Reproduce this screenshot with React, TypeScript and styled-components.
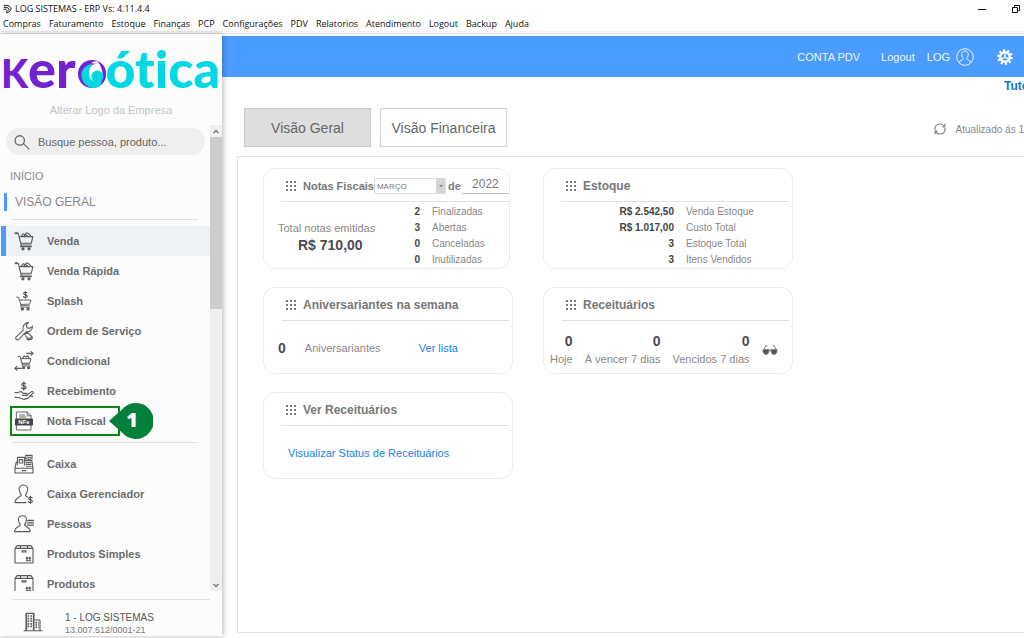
import React from "react";
import styled, { createGlobalStyle } from "styled-components";

const ui = `"Liberation Sans", Arial, sans-serif`;
const chrome = `"Open Sans", "Noto Sans", sans-serif`;

const Global = createGlobalStyle`
  * { box-sizing: border-box; }
  html, body { margin: 0; background: #fff; }
  body { font-family: ${ui}; font-size: 11px; color: #7c7c7c; overflow: hidden; }
  button, input, select { font-family: inherit; margin: 0; }
  button { padding: 0; border: 0; background: none; color: inherit; cursor: pointer; }
  a { text-decoration: none; }
  h2, p { margin: 0; }
  ul, dl, dd { margin: 0; padding: 0; list-style: none; }
`;

/* ---------- frame ---------- */
const Frame = styled.div`
  display: flex;
  flex-direction: column;
  height: 100vh;
`;
const TitleBar = styled.header`
  display: flex;
  align-items: center;
  gap: 3px;
  height: 17px;
  padding: 0 3px;
  font: 9px/16px ${chrome};
  color: #111;
`;
const WindowButtons = styled.div`
  display: flex;
  align-items: center;
  gap: 24px;
  margin-left: auto;
`;
const WindowButton = styled.button`
  display: flex;
`;
const MenuBar = styled.nav`
  display: flex;
  gap: 8px;
  height: 15px;
  padding: 0 3px;
  border-bottom: 1px solid #f2f2f2;
  color: #111;
`;
const MenuItem = styled.button`
  font: 9px/14px ${chrome};
`;
const Body = styled.div`
  display: flex;
  flex: 1;
  min-height: 0;
  margin-top: 1px;
  padding-bottom: 2px;
  border-top: 1px solid #e6e6e6;
`;

/* ---------- sidebar ---------- */
const Sidebar = styled.aside`
  position: relative;
  display: flex;
  flex-direction: column;
  flex: 0 0 222px;
  min-width: 0;
  background: #fcfcfc;
  box-shadow: 1px 0 6px rgba(0, 0, 0, 0.3);
`;
const Brand = styled.div`
  display: flex;
  flex: none;
  flex-direction: column;
  height: 91px;
  padding: 11px 1px 0;
`;
const Wordmark = styled.div`
  display: flex;
  align-items: baseline;
  height: 46px;
  font: 900 52px/46px Lato, ${ui};
  font-variant-ligatures: none;
`;
const Word = styled.span<{ $color: string }>`
  color: ${(p) => p.$color};
`;
const SmallCap = styled.span`
  font-size: 39px;
`;
const ChangeLogo = styled.button`
  margin-top: 11px;
  line-height: 16px;
  font-size: 11px;
  color: #c4c4c4;
`;
const ScrollZone = styled.div`
  display: flex;
  flex: 1;
  min-height: 0;
`;
const ScrollContent = styled.div`
  flex: 1;
  min-width: 0;
  overflow: hidden;
`;
const ScrollBar = styled.div`
  display: flex;
  flex-direction: column;
  width: 12px;
  background: #f0f0f0;
`;
const ScrollArrow = styled.button`
  display: flex;
  align-items: center;
  justify-content: center;
  height: 12px;
`;
const Track = styled.div`
  flex: 1;
`;
const Thumb = styled.div`
  height: 39%;
  background: #cdcdcd;
`;
const Search = styled.label`
  display: flex;
  align-items: center;
  gap: 8px;
  height: 27px;
  margin: 3px 5px 0 6px;
  padding: 0 8px;
  border-radius: 14px;
  background: #efefef;
`;
const SearchInput = styled.input`
  flex: 1;
  min-width: 0;
  padding: 0;
  border: 0;
  outline: 0;
  background: none;
  font-size: 11px;
  color: #666;
  &::placeholder { color: #666; opacity: 1; }
`;
const SectionLink = styled.a<{ $active?: boolean }>`
  display: block;
  margin-left: 4px;
  padding-left: ${(p) => (p.$active ? 8 : 6)}px;
  font-size: ${(p) => (p.$active ? 12 : 11)}px;
  line-height: 18px;
  color: #888;
  border-left: ${(p) => (p.$active ? "3px solid #4a9cff" : "0")};
`;
const Sections = styled.div`
  display: flex;
  flex-direction: column;
  gap: 8px;
  padding: 12px 0 8px;
`;
const Rule = styled.hr`
  flex: none;
  height: 1px;
  margin: 0 12px;
  border: 0;
  background: #e2e2e2;
`;
const Group = styled.ul`
  padding: 6px 0;
`;
const Entry = styled.li<{ $selected?: boolean }>`
  position: relative;
  margin-left: 1px;
  border-left: 5px solid ${(p) => (p.$selected ? "#4a9cff" : "transparent")};
  background: ${(p) => (p.$selected ? "#eef2f4" : "none")};
`;
const EntryLink = styled.a`
  display: flex;
  align-items: center;
  gap: 13px;
  height: 30px;
  padding-left: 8px;
  font-size: 11px;
  font-weight: bold;
  color: #6c6c6c;
`;
const Highlight = styled.span`
  position: absolute;
  inset: 0 auto 0 4px;
  width: 110px;
  border: 2px solid #0a8a0c;
`;
const Step = styled.span`
  position: absolute;
  left: 103px;
  top: -3px;
  display: flex;
  width: 44px;
  height: 36px;
`;
const StepNumber = styled.b`
  position: absolute;
  inset: 0 0 0 2px;
  text-align: center;
  font: 800 20px/34px "Open Sans", ${ui};
  color: #fff;
`;
const Company = styled.footer`
  display: flex;
  flex: none;
  flex-direction: column;
  padding-top: 8px;
`;
const CompanyRow = styled.div`
  display: flex;
  gap: 22px;
  padding: 12px 0 0 23px;
`;
const CompanyText = styled.p<{ $small?: boolean }>`
  font-size: ${(p) => (p.$small ? 9 : 10)}px;
  line-height: 12px;
  color: ${(p) => (p.$small ? "#777" : "#555")};
`;

/* ---------- main ---------- */
const Main = styled.main`
  display: flex;
  flex-direction: column;
  flex: 1;
  min-width: 0;
  padding-top: 2px;
`;
const TopBar = styled.div`
  display: flex;
  align-items: center;
  justify-content: flex-end;
  height: 41px;
  padding-right: 11px;
  background: #4a9cff;
  color: #eaf4ff;
`;
const TopButton = styled.button<{ $gap: number }>`
  display: flex;
  align-items: center;
  gap: 6px;
  margin-left: ${(p) => p.$gap}px;
  font-size: 11px;
`;
const Tutorial = styled.a`
  align-self: flex-end;
  width: 20px;
  overflow: hidden;
  font-size: 12px;
  line-height: 18px;
  font-weight: bold;
  color: #0a78d8;
`;
const TabRow = styled.div`
  display: flex;
  align-items: center;
  gap: 9px;
  margin: 13px 0 9px 22px;
`;
const Tab = styled.button<{ $active?: boolean }>`
  width: 127px;
  height: 39px;
  border: 1px solid ${(p) => (p.$active ? "#c6c6c6" : "#cfcfcf")};
  background: ${(p) => (p.$active ? "#dedede" : "#fff")};
  font-size: 14px;
  color: #666;
`;
const Updated = styled.div`
  display: flex;
  align-items: center;
  gap: 10px;
  margin-left: auto;
  font-size: 10px;
  white-space: nowrap;
  color: #888;
  padding-top: 3px;
`;
const Panel = styled.section`
  flex: 1;
  margin: 0 0 3px 15px;
  padding: 11px 0 0 25px;
  border: 1px solid #e2e2e2;
  border-right: 0;
`;
const Cards = styled.div`
  display: grid;
  grid-template-columns: 250px 250px;
  column-gap: 30px;
  row-gap: 18px;
`;
const Card = styled.article<{ $narrow?: boolean }>`
  min-height: 87px;
  margin-right: ${(p) => (p.$narrow ? 3 : 0)}px;
  border: 1px solid #ececec;
  border-radius: 12px;
`;
const CardHead = styled.div<{ $flush?: boolean }>`
  display: flex;
  align-items: center;
  height: 33px;
  margin: 0 ${(p) => (p.$flush ? 0 : 3)}px 0 18px;
  padding: 2px 0 0 4px;
  border-bottom: 1px solid #e0e0e0;
`;
const CardTitle = styled.h2<{ $small?: boolean }>`
  flex: none;
  margin-left: 7px;
  font-size: ${(p) => (p.$small ? 11 : 12)}px;
  font-weight: bold;
  white-space: nowrap;
  color: #777;
`;
const Of = styled.b`
  margin: 0 1px 0 2px;
  font-size: 11px;
`;
const MonthBox = styled.span`
  position: relative;
  display: flex;
  flex: none;
  width: 72px;
  height: 16px;
`;
const Month = styled.select`
  width: 100%;
  padding: 0 12px 0 2px;
  border: 1px solid #dcdcdc;
  border-radius: 0;
  appearance: none;
  background: linear-gradient(#d4d4d4, #d4d4d4) right / 9px 100% no-repeat #fff;
  font-size: 8px;
  color: #777;
`;
const MonthArrow = styled.span`
  position: absolute;
  right: 3px;
  top: 7px;
  border: 2px solid transparent;
  border-top-color: #777;
  border-bottom: 0;
`;
const Year = styled.input`
  flex: 1;
  min-width: 0;
  height: 18px;
  margin-bottom: 3px;
  padding: 0;
  border: 0;
  border-bottom: 1px solid #bbb;
  border-radius: 0;
  background: none;
  text-align: center;
  font-size: 12px;
  color: #777;
`;
const Split = styled.div`
  display: grid;
  grid-template-columns: 124px 1fr;
`;
const Total = styled.div`
  padding: 18px 0 0 14px;
  white-space: nowrap;
  line-height: 16px;
  color: #888;
`;
const Amount = styled.b`
  display: block;
  padding-left: 20px;
  font-size: 14px;
  line-height: 18px;
  color: #4c4a50;
`;
const Stats = styled.dl<{ $value: number }>`
  display: grid;
  grid-template-columns: ${(p) => p.$value}px 1fr;
  column-gap: 12px;
  padding-top: 2px;
  font-size: 10px;
  line-height: 16px;
`;
const StatPair = styled.div`
  display: contents;
`;
const StatValue = styled.dt`
  text-align: right;
  font-weight: bold;
  color: #444;
`;
const StatLabel = styled.dd`
  color: #888;
`;
const Big = styled.b`
  font-size: 14px;
  color: #4c4a50;
`;
const Line = styled.div`
  display: flex;
  align-items: center;
  height: 52px;
  padding: 2px 0 0 14px;
  color: #888;
`;
const Caption = styled.span`
  width: 114px;
  margin-left: 19px;
`;
const Action = styled.a<{ $inset?: boolean }>`
  color: #1a82e2;
  padding-left: ${(p) => (p.$inset ? 10 : 0)}px;
`;
const Recipes = styled.div`
  display: flex;
  align-items: center;
  gap: 12px;
  padding: 11px 0 0 6px;
`;
const Count = styled.div`
  display: flex;
  flex-direction: column;
  align-items: flex-end;
  line-height: 18px;
  white-space: nowrap;
  color: #888;
`;

/* ---------- icons ---------- */
const Svg = styled.svg`
  display: block;
  flex: none;
  fill: none;
  stroke: currentColor;
`;
const Ring = styled(Svg)`
  margin-left: 2px;
`;
const Icon = ({ children, size = 20, color = "#5a5a5a" }: { children: React.ReactNode; size?: number; color?: string }) => (
  <Svg width={size} height={size} viewBox="0 0 20 20" strokeWidth="1.1" strokeLinejoin="round" strokeLinecap="round" color={color} aria-hidden>
    {children}
  </Svg>
);

const icons: Record<string, React.ReactNode> = {
  cart: (
    <>
      <path d="M2.5 2.2H4.2L7.2 14H17.2M5.2 5.6H18.8L17.4 12.2H6.8M7.2 14L6.6 15.6H17.4" />
      <rect x="1.2" y="1.4" width="2.2" height="1.6" fill="currentColor" strokeWidth="0.4" />
      <path d="M7.2 5.4L9 2.8L11 3.6L12.6 1.8L15 3L17 5.4M9.6 5.2L11.6 3.8L14 5.2" />
      <circle cx="9" cy="17.8" r="1.1" fill="currentColor" />
      <circle cx="15" cy="17.8" r="1.1" fill="currentColor" />
    </>
  ),
  splash: (
    <>
      <path d="M2.5 6.2H4.6L7.2 14.6H15.4M5.6 9H17L15.6 13.2L6.8 13.4M7.2 14.6L6.6 16.2H15.6" strokeWidth="0.9" />
      <circle cx="8.4" cy="18" r="1.1" fill="currentColor" />
      <circle cx="14" cy="18" r="1.1" fill="currentColor" />
      <path d="M13 1.8C12.4 1 9.6 1 9.6 2.6S13.2 3.6 13.2 5.2S10 6.6 9.4 5.6M11.4 0.4V7.2" />
    </>
  ),
  wrench: (
    <>
      <path d="M2 16.2L9.2 9.2C8 5.6 10.2 1.8 14.4 1.4L12.2 4.2L13.2 6.8L15.8 7.4L18.4 5.2C18.6 9 15.4 11.4 12 10.8L4.8 18.4C3 19.6 0.8 17.8 2 16.2Z" />
      <path d="M10.6 13.6L13.2 11.4L18 15.6C19.2 17.6 17 19.4 15.4 18.4L11.6 14.8M12.6 17.8L14.6 19L17.6 16" />
    </>
  ),
  swap: (
    <>
      <path d="M4 5.4H6L8.4 13.2H15.6M6.6 7.6H17L15.6 12.2H8M8.4 13.2L8 15H16" strokeWidth="1" />
      <path d="M8.4 7.4L10 5L12 6L13.6 4.8L15.2 7.4M12.6 2.4H19M17 0.6L19.2 2.4L17 4.2M7.4 17.4H1M3 15.4L0.8 17.4L3 19.4" />
      <circle cx="9.6" cy="16.8" r="1" fill="currentColor" />
      <circle cx="14.6" cy="16.8" r="1" fill="currentColor" />
    </>
  ),
  hand: (
    <>
      <path d="M11.6 2.8C11 1.8 7.8 1.8 7.8 3.6S12 4.6 12 6.4S8.4 8 7.6 6.8M9.8 1V9" strokeWidth="1.3" />
      <path d="M1 11.6H3.8L7 10.4L9.4 12.4H12.4C13.8 12.6 13.6 14.2 12.4 14.4H8.4M13.8 13.6L17.6 10.6C19 10.2 19.8 11.4 18.8 12.4L13.8 17.4L10 18.4L5.6 16.8L1 16.4M15.6 15L18.8 15.4" />
    </>
  ),
  register: (
    <>
      <path d="M3.4 11V3.4H10.6V11M5.2 5.6H8.8V9H5.2ZM11.8 1.4H18V5H11.8ZM13.4 3.2H16.6M14.8 5V6.6M10.6 6.6H17.8L19 14.2H1L2.2 8H3.4M1 14.2V19H19V14.2M8.4 16.6H11.6" />
      <path d="M12.2 8.6H16.8M12.2 10.4H17M12.2 12.2H17.2" strokeDasharray="1 1" />
    </>
  ),
  cashier: (
    <>
      <path d="M9.4 1C6.4 1 5 3 5.2 5.8C5.4 8.4 6.6 10 7.4 10.8C7.4 13 1.2 12.6 1 18.6H12M9.4 1C12.6 1 13.8 3 13.6 5.8C13.4 8.4 12.2 10 11.4 10.8C11.4 12 12.4 12.4 13.4 12.8" />
      <path d="M18.2 13.8C17.4 12.8 14.6 12.8 14.6 14.6S18.4 15.4 18.4 17.2S15 18.8 14.2 17.6M16.4 12.2V19.6" />
    </>
  ),
  people: (
    <>
      <path d="M8.4 1.8C5.4 1.8 4.2 3.6 4.4 6C4.6 8.4 5.6 9.8 6.4 10.6C6.4 12.8 0.8 12.4 0.6 17.6H16.2C16 12.4 10.4 12.8 10.4 10.6C11.2 9.8 12.2 8.4 12.4 6C12.6 3.6 11.4 1.8 8.4 1.8Z" />
      <path d="M13.6 6.5H19.4M13.6 8.8H19.4M13.6 11.1H19.4" strokeWidth="1.3" />
    </>
  ),
  box: <path d="M1 4.4L3.2 1.6H16.8L19 4.4V19H1V4.4H19M8 6.8H12V8H8ZM6.8 1.6L6.2 4.4M13.2 1.6L13.8 4.4M13 13.2V15.8M15.8 13.2V15.8M12.2 16.8H16.6M12.2 14.2L13 13.2L13.8 14.2M15 14.2L15.8 13.2L16.6 14.2" />,
};

const NfeIcon = () => (
  <Icon>
    <path d="M2.4 8V1H13.2L17 4.8V8M13.2 1V4.8H17M2.4 14V19H17V14M5.6 4H10.6M5.6 6H12" strokeWidth="0.9" />
    <rect x="1" y="7.4" width="18" height="7" rx="1" fill="#444" stroke="none" />
    <text x="10" y="13" textAnchor="middle" fontSize="6" fontWeight="bold" fill="#fff" stroke="none">NFe</text>
  </Icon>
);

const Dots = () => (
  <Svg width="10" height="10" viewBox="0 0 10 10" aria-hidden>
    {[0, 4, 8].map((y) => [0, 4, 8].map((x) => <rect key={`${x}-${y}`} x={x} y={y} width="2" height="2" fill="#777" stroke="none" />))}
  </Svg>
);

const LogoRing = () => (
  <Ring width="28" height="28" viewBox="0 0 28 28" aria-hidden>
    <g stroke="none">
      <circle cx="14" cy="14" r="14" fill="#7421d0" />
      <path d="M14 4C7 5 3 10 3.4 15.4C3.8 22.6 9 27.6 15 28C20 28 23.6 25.6 25 22L17 16Z" fill="#00d8e4" />
      <path d="M19.6 1.2C23.6 5 25.8 9 25.2 14C25 17 24 19.4 22 21.4C16 23 11.6 19.6 11.2 15C10.4 9 13.4 4.6 18 3.6L13 3.2C14.6 2 17 1 19.6 1.2Z" fill="#fcfcfc" />
      <path d="M19.6 1.2C25 3.6 28 8 28 14C28 19 25.6 23 22.4 25.2C25.6 20 26.4 10 19.6 1.2Z" fill="#7421d0" />
      <circle cx="19.4" cy="16.4" r="6" fill="#00d8e4" />
    </g>
  </Ring>
);

const Gear = () => (
  <Svg width="16" height="16" viewBox="0 0 16 16" aria-hidden>
    <circle cx="8" cy="8" r="6.8" stroke="#fff" strokeWidth="2" strokeDasharray="2.2 2.07" />
    <circle cx="8" cy="8" r="4.8" stroke="#fff" strokeWidth="2.6" />
    <path d="M8 3.6V8L4.4 10.4M8 8L11.6 10.4" stroke="#fff" strokeWidth="1.3" />
  </Svg>
);

const menu = ["Compras", "Faturamento", "Estoque", "Finanças", "PCP", "Configurações", "PDV", "Relatorios", "Atendimento", "Logout", "Backup", "Ajuda"];
const sales = [
  ["Venda", "cart"],
  ["Venda Rápida", "cart"],
  ["Splash", "splash"],
  ["Ordem de Serviço", "wrench"],
  ["Condicional", "swap"],
  ["Recebimento", "hand"],
];
const records = [
  ["Caixa", "register"],
  ["Caixa Gerenciador", "cashier"],
  ["Pessoas", "people"],
  ["Produtos Simples", "box"],
  ["Produtos", "box"],
];

const Entries = ({ items, selected }: { items: string[][]; selected?: string }) => (
  <>
    {items.map(([label, icon]) => (
      <Entry key={label} $selected={label === selected}>
        <EntryLink href="#">
          <Icon>{icons[icon]}</Icon>
          {label}
        </EntryLink>
      </Entry>
    ))}
  </>
);

const StatList = ({ rows, value }: { rows: string[][]; value: number }) => (
  <Stats $value={value}>
    {rows.map(([v, label]) => (
      <StatPair key={label}>
        <StatValue>{v}</StatValue>
        <StatLabel>{label}</StatLabel>
      </StatPair>
    ))}
  </Stats>
);

export default function App() {
  return (
    <Frame>
      <Global />
      <TitleBar>
        <Svg width="9" height="10" viewBox="0 0 9 10" stroke="#222" aria-hidden>
          <path d="M1 1.6C5 0.6 8 2.6 8 5C7.6 7.4 5 8.8 3 9M0.8 3.4C3.8 2.8 6 4 5.8 5.4C5.4 6.8 4 7.4 2.8 7.4M0.6 5.2H3.6" />
        </Svg>
        LOG SISTEMAS - ERP Vs: 4.11.4.4
        <WindowButtons>
          <WindowButton aria-label="Minimizar">
            <Svg width="10" height="10" viewBox="0 0 10 10" stroke="#222"><path d="M1 5.5H9" /></Svg>
          </WindowButton>
          <WindowButton aria-label="Restaurar">
            <Svg width="10" height="10" viewBox="0 0 10 10" stroke="#222"><path d="M1.5 3.5H6.5V8.5H1.5ZM3.5 3.5V1.5H8.5V6.5H6.5" /></Svg>
          </WindowButton>
        </WindowButtons>
      </TitleBar>
      <MenuBar>
        {menu.map((m) => <MenuItem key={m}>{m}</MenuItem>)}
      </MenuBar>
      <Body>
        <Sidebar>
          <Brand>
            <Wordmark>
              <Word $color="#7421d0"><SmallCap>K</SmallCap>er</Word>
              <LogoRing />
              <Word $color="#00d8e4">ótica</Word>
            </Wordmark>
            <ChangeLogo>Alterar Logo da Empresa</ChangeLogo>
          </Brand>
          <ScrollZone>
            <ScrollContent>
              <Search>
                <Icon size={16} color="#666"><path d="M13 8A5.8 5.8 0 1 1 1.4 8A5.8 5.8 0 1 1 13 8M11.6 12L18.6 18.6" strokeWidth="1.6" /></Icon>
                <SearchInput aria-label="Buscar" placeholder="Busque pessoa, produto..." />
              </Search>
              <Sections>
                <SectionLink href="#">INÍCIO</SectionLink>
                <SectionLink href="#" $active>VISÃO GERAL</SectionLink>
              </Sections>
              <Rule />
              <Group>
                <Entries items={sales} selected="Venda" />
                <Entry>
                  <EntryLink href="#">
                    <NfeIcon />
                    Nota Fiscal
                  </EntryLink>
                  <Highlight />
                  <Step>
                    <Svg width="44" height="36" viewBox="0 0 44 36" aria-hidden>
                      <path d="M0 18L13 6.4A18 18 0 1 1 13 29.6Z" fill="#00803a" stroke="none" />
                    </Svg>
                    <StepNumber>1</StepNumber>
                  </Step>
                </Entry>
              </Group>
              <Rule />
              <Group>
                <Entries items={records} />
              </Group>
            </ScrollContent>
            <ScrollBar>
              <ScrollArrow aria-label="Rolar para cima">
                <Svg width="6" height="5" viewBox="0 0 6 5" stroke="#444" strokeWidth="1.4"><path d="M0.5 4L3 1.4L5.5 4" /></Svg>
              </ScrollArrow>
              <Track><Thumb /></Track>
              <ScrollArrow aria-label="Rolar para baixo">
                <Svg width="6" height="5" viewBox="0 0 6 5" stroke="#444" strokeWidth="1.4"><path d="M0.5 1L3 3.6L5.5 1" /></Svg>
              </ScrollArrow>
            </ScrollBar>
          </ScrollZone>
          <Company>
            <Rule />
            <CompanyRow>
              <Icon><path d="M3 18.6V1.4H11V18.6M11 8H17V18.6M1 18.8H19" /><path d="M4.6 4H9.6M4.6 6.6H9.6M4.6 9.2H9.6M4.6 11.8H9.6M4.6 14.4H9.6M12.4 10.6H16M12.4 13H16M12.4 15.4H16" strokeDasharray="1.6 1.2" strokeWidth="1.7" strokeLinecap="butt" /><path d="M3.6 2V18M10.4 2V18" /></Icon>
              <div>
                <CompanyText>1 - LOG SISTEMAS</CompanyText>
                <CompanyText $small>13.007.512/0001-21</CompanyText>
              </div>
            </CompanyRow>
          </Company>
        </Sidebar>
        <Main>
          <TopBar>
            <TopButton $gap={0}>CONTA PDV</TopButton>
            <TopButton $gap={21}>Logout</TopButton>
            <TopButton $gap={12}>
              LOG
              <Svg width="18" height="18" viewBox="0 0 18 18" stroke="#fff" aria-hidden>
                <circle cx="9" cy="9" r="8.3" />
                <path d="M9 3C6.6 3 5.6 4.8 5.8 6.8C6 8.8 6.8 9.8 7.4 10.4C7.4 12.4 3.6 12 3 14.6M9 3C11.4 3 12.4 4.8 12.2 6.8C12 8.8 11.2 9.8 10.6 10.4C10.6 12.4 14.4 12 15 14.6" />
              </Svg>
            </TopButton>
            <TopButton $gap={23} aria-label="Ajustes"><Gear /></TopButton>
          </TopBar>
          <Tutorial href="#">Tuto</Tutorial>
          <TabRow>
            <Tab $active>Visão Geral</Tab>
            <Tab>Visão Financeira</Tab>
            <Updated>
              <Svg width="12" height="12" viewBox="0 0 12 12" stroke="#888" strokeWidth="1.2" aria-hidden>
                <path d="M1 7V5C1.4 2.4 3.6 1 6 1C8 1 9.4 1.8 10.4 3.4M11 5V7C10.6 9.6 8.4 11 6 11C4 11 2.6 10.2 1.6 8.6M10.8 0.8V3.8H8.4M1.2 11.2V8.2H3.6" />
              </Svg>
              Atualizado ás 1
            </Updated>
          </TabRow>
          <Panel>
            <Cards>
              <Card $narrow>
                <CardHead $flush>
                  <Dots />
                  <CardTitle $small>Notas Fiscais</CardTitle>
                  <MonthBox>
                    <Month aria-label="Mês"><option>MARÇO</option></Month>
                    <MonthArrow />
                  </MonthBox>
                  <Of>de</Of>
                  <Year aria-label="Ano" defaultValue="2022" />
                </CardHead>
                <Split>
                  <Total>
                    Total notas emitidas
                    <Amount>R$ 710,00</Amount>
                  </Total>
                  <StatList value={32} rows={[["2", "Finalizadas"], ["3", "Abertas"], ["0", "Canceladas"], ["0", "Inutilizadas"]]} />
                </Split>
              </Card>
              <Card>
                <CardHead>
                  <Dots />
                  <CardTitle>Estoque</CardTitle>
                </CardHead>
                <StatList value={130} rows={[["R$ 2.542,50", "Venda Estoque"], ["R$ 1.017,00", "Custo Total"], ["3", "Estoque Total"], ["3", "Itens Vendidos"]]} />
              </Card>
              <Card>
                <CardHead>
                  <Dots />
                  <CardTitle>Aniversariantes na semana</CardTitle>
                </CardHead>
                <Line>
                  <Big>0</Big>
                  <Caption>Aniversariantes</Caption>
                  <Action href="#">Ver lista</Action>
                </Line>
              </Card>
              <Card>
                <CardHead>
                  <Dots />
                  <CardTitle>Receituários</CardTitle>
                </CardHead>
                <Recipes>
                  <Count><Big>0</Big>Hoje</Count>
                  <Count><Big>0</Big>Á vencer 7 dias</Count>
                  <Count><Big>0</Big>Vencidos 7 dias</Count>
                  <Svg width="16" height="10" viewBox="0 0 16 10" stroke="#666" aria-hidden>
                    <path d="M1.4 5.4L3.8 0.8H5.4M14.6 5.4L12.2 0.8H10.6M6.6 5.4H9.4" />
                    <path d="M1 4.6H7C7.2 8 6 9.4 4 9.4S0.8 8 1 4.6ZM9 4.6H15C15.2 8 14 9.4 12 9.4S8.8 8 9 4.6Z" fill="#555" />
                  </Svg>
                </Recipes>
              </Card>
              <Card>
                <CardHead>
                  <Dots />
                  <CardTitle>Ver Receituários</CardTitle>
                </CardHead>
                <Line>
                  <Action href="#" $inset>Visualizar Status de Receituários</Action>
                </Line>
              </Card>
            </Cards>
          </Panel>
        </Main>
      </Body>
    </Frame>
  );
}
